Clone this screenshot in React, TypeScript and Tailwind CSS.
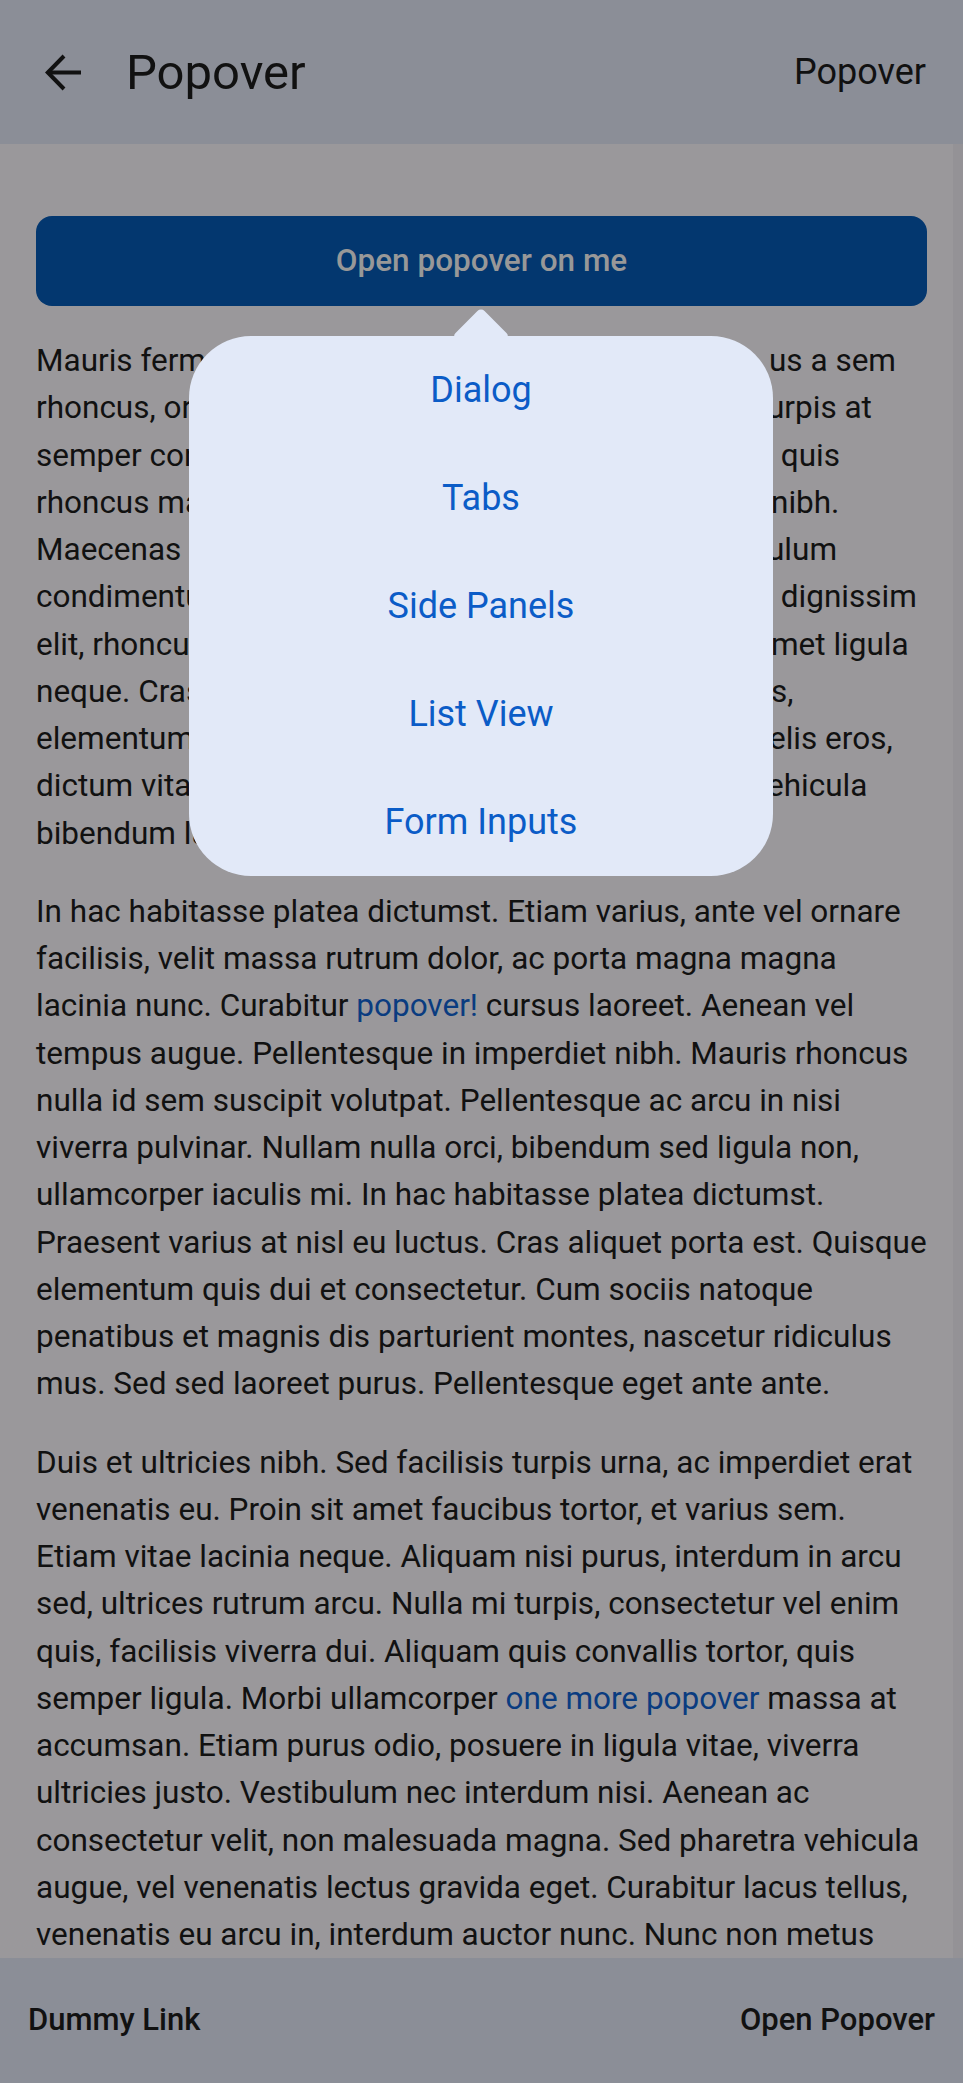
import React from "react";

const menuItems = ["Dialog", "Tabs", "Side Panels", "List View", "Form Inputs"];

// first paragraph, line by line: the middle of each line sits under the popover
const coveredLines: { w: string; hidden: string; tail: string }[] = [
  { w: "w-[733px]", hidden: "Mauris fermentum tortor, nunc lectus egestas, ", tail: "us a sem" },
  { w: "w-[731px]", hidden: "rhoncus, ornare eget lacinia sodales nisi ligula ", tail: "urpis at" },
  { w: "w-[737px]", hidden: "semper consequat mauris vitae lectus. Donec ac ", tail: " quis" },
  { w: "w-[735px]", hidden: "rhoncus massa, a pharetra purus tempus sit ", tail: "nibh." },
  { w: "w-[731px]", hidden: "Maecenas lacinia justo nec lorem posuere, eget ", tail: "ulum" },
  { w: "w-[737px]", hidden: "condimentum ante, in ultricies odio tempor ", tail: " dignissim" },
  { w: "w-[735px]", hidden: "elit, rhoncus quis placerat efficitur tortor. Donec ", tail: "met ligula" },
  { w: "w-[735px]", hidden: "neque. Cras a lacus sed quam mollis tincidunt ", tail: "s," },
  { w: "w-[733px]", hidden: "elementum sapien, non porta nulla auctor vitae ", tail: "elis eros," },
  { w: "w-[731px]", hidden: "dictum vitae dolor. Phasellus eu mi quis nisl ", tail: "ehicula" },
];

const BackArrow = () => (
  <svg width="36" height="37" viewBox="0 0 36 37" fill="none" stroke="#111" strokeWidth="4">
    <path d="M19 2L2.8 18.5L19 35" strokeLinejoin="miter" />
    <path d="M3 18.5H36" />
  </svg>
);

export default function App() {
  return (
    <div
      className="relative flex h-screen flex-col overflow-hidden bg-[#9a989b] text-[#111]"
      style={{ fontFamily: "Roboto, 'Noto Sans', sans-serif" }}
    >
      {/* header */}
      <header className="flex h-[144px] shrink-0 items-center bg-[#8b8e97] pl-[45px] pr-[37px]">
        <BackArrow />
        <h1 className="ml-[45px] text-[49px] font-normal leading-none">Popover</h1>
        <span className="ml-auto text-[36px] leading-none">Popover</span>
      </header>

      {/* content */}
      <main className="relative min-h-0 flex-1 overflow-hidden">
        <div className="flex flex-col gap-[31px] px-[36px] pt-[72px] text-[31.5px] leading-[47.25px]">
          <button className="h-[90px] w-full rounded-[16px] bg-[#03376f] text-[31.5px] font-medium text-[#989898]">
            Open popover on me
          </button>

          <p>
            {coveredLines.map((line, i) => (
              <span key={i} className="block whitespace-pre">
                <span className={`inline-block overflow-hidden align-top ${line.w}`}>{line.hidden}</span>
                {line.tail}
              </span>
            ))}
            <span className="block">bibendum luctus. Nulla facilisi.</span>
          </p>

          <p>
            In hac habitasse platea dictumst. Etiam varius, ante vel ornare facilisis, velit massa rutrum
            dolor, ac porta magna magna lacinia nunc. Curabitur{" "}
            <span className="text-[#0a3c80]">popover!</span> cursus laoreet. Aenean vel tempus augue.
            Pellentesque in imperdiet nibh. Mauris rhoncus nulla id sem suscipit volutpat. Pellentesque ac
            arcu in nisi viverra pulvinar. Nullam nulla orci, bibendum sed ligula non, ullamcorper iaculis
            mi. In hac habitasse platea dictumst. Praesent varius at nisl eu luctus. Cras aliquet porta
            est. Quisque elementum quis dui et consectetur. Cum sociis natoque penatibus et magnis dis
            parturient montes, nascetur ridiculus mus. Sed sed laoreet purus. Pellentesque eget ante ante.
          </p>

          <p>
            Duis et ultricies nibh. Sed facilisis turpis urna, ac imperdiet erat venenatis eu. Proin sit
            amet faucibus tortor, et varius sem. Etiam vitae lacinia neque. Aliquam nisi purus, interdum in
            arcu sed, ultrices rutrum arcu. Nulla mi turpis, consectetur vel enim quis, facilisis viverra
            dui. Aliquam quis convallis tortor, quis semper ligula. Morbi ullamcorper{" "}
            <span className="text-[#0a3c80]">one more popover</span> massa at accumsan. Etiam purus odio,
            posuere in ligula vitae, viverra ultricies justo. Vestibulum nec interdum nisi. Aenean ac
            consectetur velit, non malesuada magna. Sed pharetra vehicula augue, vel venenatis lectus
            gravida eget. Curabitur lacus tellus, venenatis eu arcu in, interdum auctor nunc. Nunc non
            metus neque. Suspendisse viverra lectus sed risus aliquet, vel accumsan dolor feugiat.
          </p>
        </div>

        {/* scrollbar track */}
        <div className="absolute bottom-0 right-0 top-0 w-[10px] bg-[#949296]" />
      </main>

      {/* footer */}
      <footer className="flex h-[125px] shrink-0 items-center justify-between bg-[#8b8e97] px-[28px] text-[31px] font-medium">
        <span>Dummy Link</span>
        <span>Open Popover</span>
      </footer>

      {/* popover */}
      <div className="absolute left-[189px] top-[336px] w-[584px]">
        <div className="absolute left-1/2 top-[-20.5px] h-[41px] w-[41px] -translate-x-1/2 rotate-45 rounded-[5px] bg-[#e2e9f8]" />
        <ul className="relative flex flex-col rounded-[62px] bg-[#e2e9f8]">
          {menuItems.map((item) => (
            <li
              key={item}
              className="flex h-[108px] items-center justify-center text-[36px] text-[#0b5cc7]"
            >
              {item}
            </li>
          ))}
        </ul>
      </div>
    </div>
  );
}
